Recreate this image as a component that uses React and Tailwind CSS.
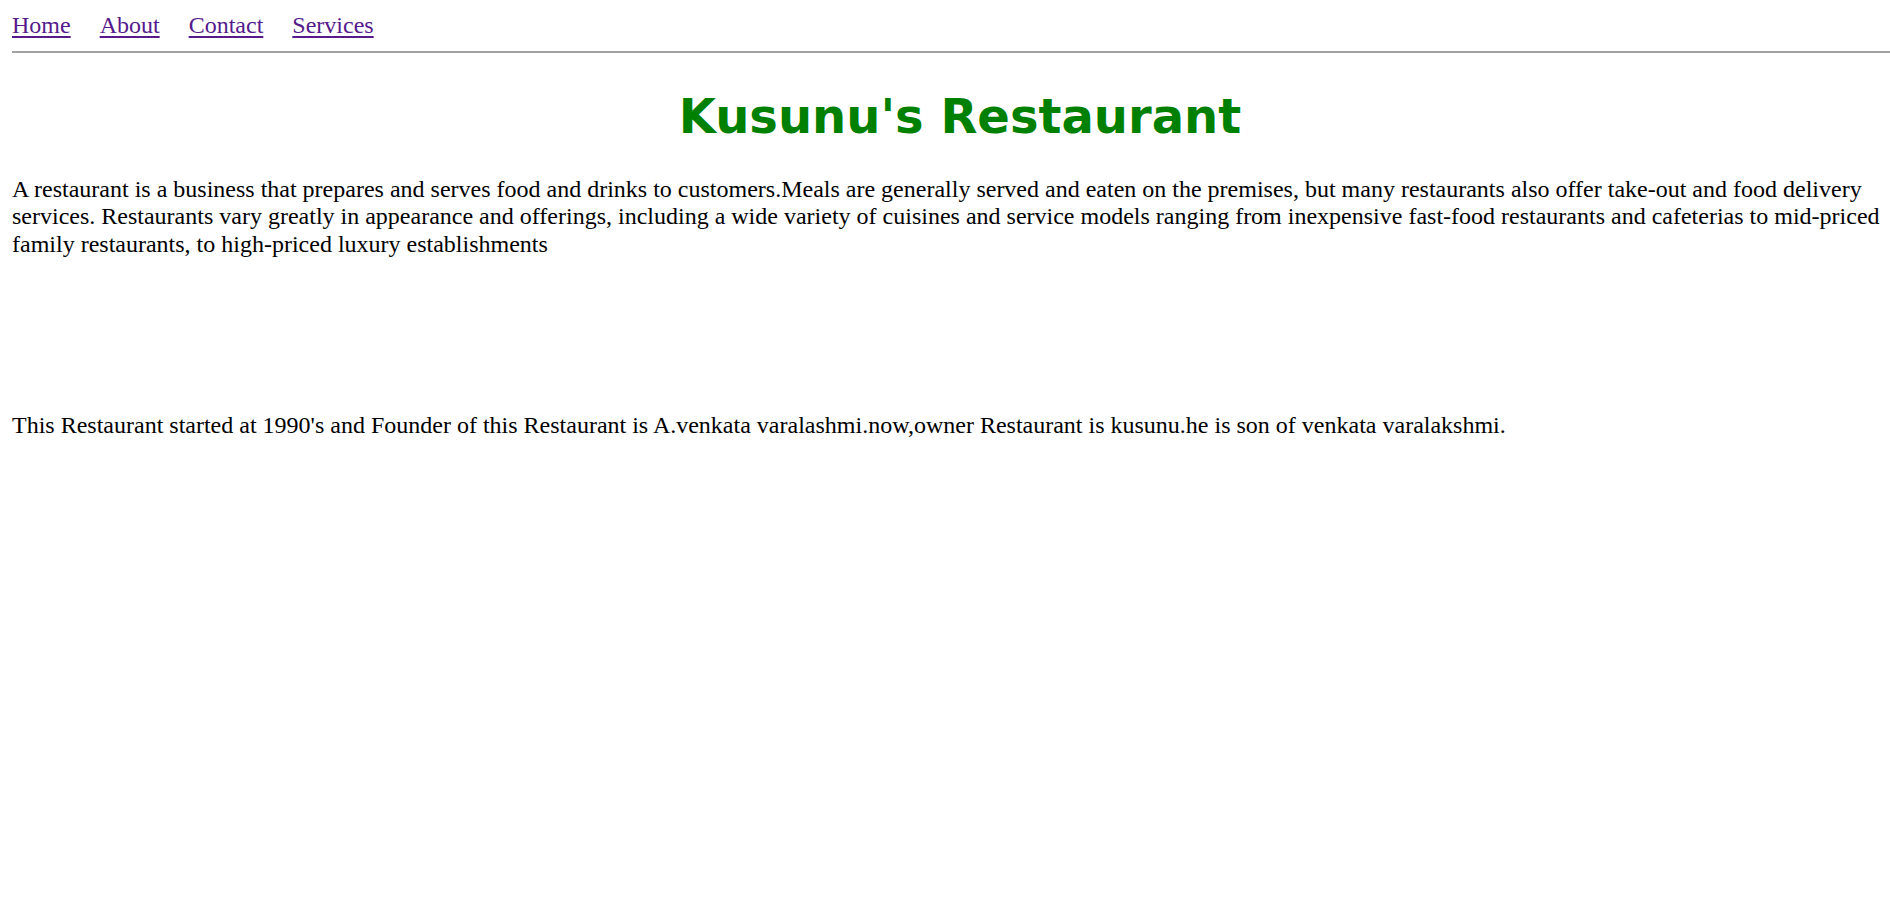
import React from 'react'

const links = ['Home', 'About', 'Contact', 'Services']

export default function App() {
  return (
    <div className="min-h-screen overflow-hidden bg-white text-black font-['Liberation_Serif','Times_New_Roman',serif] text-[24px] leading-[27.6px]">
      <nav className="flex gap-[29px] pl-[12px] pt-[12px]">
        {links.map(l => (
          <a key={l} href="#" className="text-[#551a8b] underline decoration-[1.5px] underline-offset-[3px]">
            {l}
          </a>
        ))}
      </nav>

      <hr className="ml-[12px] mt-[11px] border-0 border-t-2 border-[#a3a3a3]" />

      <div className="pl-[12px]">
        <h1 className="mt-[35px] pl-[18px] text-center font-['DejaVu_Sans',Verdana,sans-serif] text-[48px] font-bold leading-[56px] text-[#008000]">
          Kusunu's Restaurant
        </h1>

        <p className="mt-[32px]">
          A restaurant is a business that prepares and serves food and drinks to customers.Meals are generally served and eaten on the premises, but many restaurants also offer take-out and food delivery services. Restaurants vary greatly in appearance and offerings, including a wide variety of cuisines and service models ranging from inexpensive fast-food restaurants and cafeterias to mid-priced family restaurants, to high-priced luxury establishments
        </p>

        <p className="mt-[154px]">
          This Restaurant started at 1990's and Founder of this Restaurant is A.venkata varalashmi.now,owner Restaurant is kusunu.he is son of venkata varalakshmi.
        </p>
      </div>
    </div>
  )
}
